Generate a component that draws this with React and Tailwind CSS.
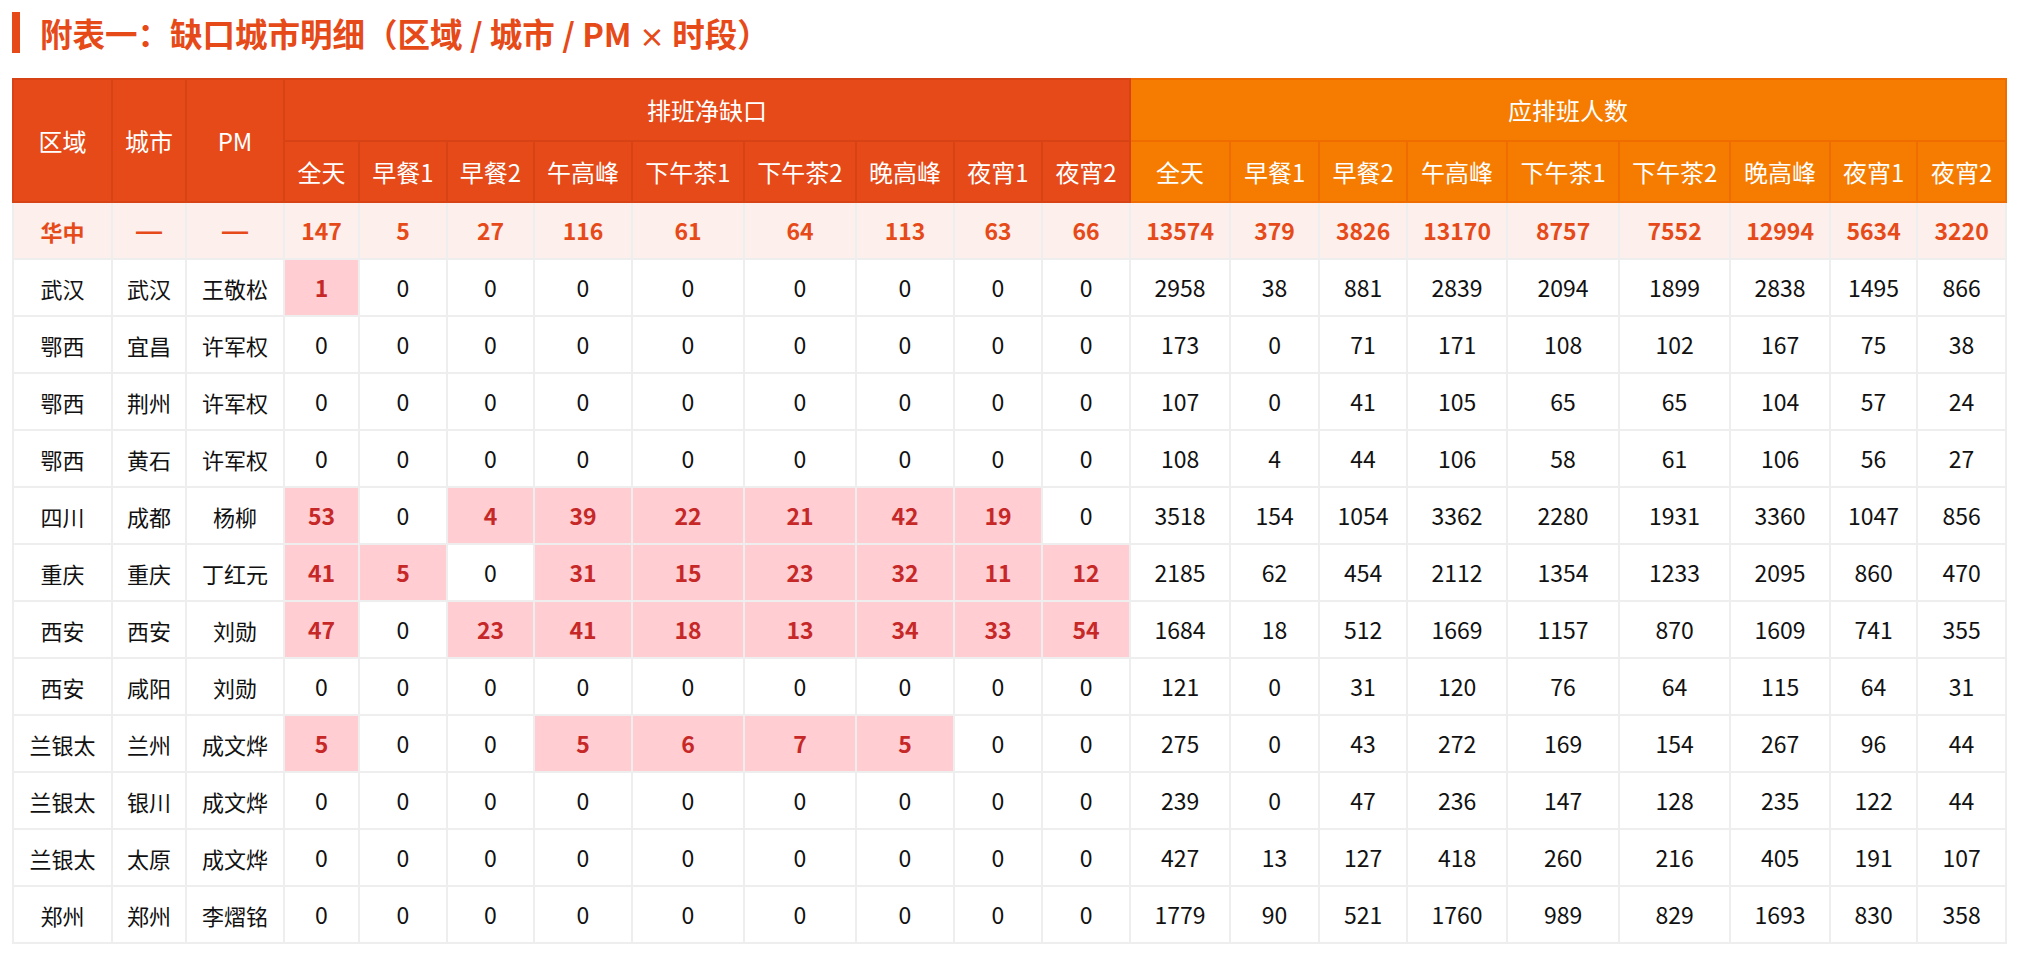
import React from 'react';

const SLOTS = ['全天', '早餐1', '早餐2', '午高峰', '下午茶1', '下午茶2', '晚高峰', '夜宵1', '夜宵2'];

const TOTAL = {
  region: '华中',
  gaps: [147, 5, 27, 116, 61, 64, 113, 63, 66],
  staff: [13574, 379, 3826, 13170, 8757, 7552, 12994, 5634, 3220],
};

const ROWS = [
  { region: '武汉', city: '武汉', pm: '王敬松', gaps: [1, 0, 0, 0, 0, 0, 0, 0, 0], staff: [2958, 38, 881, 2839, 2094, 1899, 2838, 1495, 866] },
  { region: '鄂西', city: '宜昌', pm: '许军权', gaps: [0, 0, 0, 0, 0, 0, 0, 0, 0], staff: [173, 0, 71, 171, 108, 102, 167, 75, 38] },
  { region: '鄂西', city: '荆州', pm: '许军权', gaps: [0, 0, 0, 0, 0, 0, 0, 0, 0], staff: [107, 0, 41, 105, 65, 65, 104, 57, 24] },
  { region: '鄂西', city: '黄石', pm: '许军权', gaps: [0, 0, 0, 0, 0, 0, 0, 0, 0], staff: [108, 4, 44, 106, 58, 61, 106, 56, 27] },
  { region: '四川', city: '成都', pm: '杨柳', gaps: [53, 0, 4, 39, 22, 21, 42, 19, 0], staff: [3518, 154, 1054, 3362, 2280, 1931, 3360, 1047, 856] },
  { region: '重庆', city: '重庆', pm: '丁红元', gaps: [41, 5, 0, 31, 15, 23, 32, 11, 12], staff: [2185, 62, 454, 2112, 1354, 1233, 2095, 860, 470] },
  { region: '西安', city: '西安', pm: '刘勋', gaps: [47, 0, 23, 41, 18, 13, 34, 33, 54], staff: [1684, 18, 512, 1669, 1157, 870, 1609, 741, 355] },
  { region: '西安', city: '咸阳', pm: '刘勋', gaps: [0, 0, 0, 0, 0, 0, 0, 0, 0], staff: [121, 0, 31, 120, 76, 64, 115, 64, 31] },
  { region: '兰银太', city: '兰州', pm: '成文烨', gaps: [5, 0, 0, 5, 6, 7, 5, 0, 0], staff: [275, 0, 43, 272, 169, 154, 267, 96, 44] },
  { region: '兰银太', city: '银川', pm: '成文烨', gaps: [0, 0, 0, 0, 0, 0, 0, 0, 0], staff: [239, 0, 47, 236, 147, 128, 235, 122, 44] },
  { region: '兰银太', city: '太原', pm: '成文烨', gaps: [0, 0, 0, 0, 0, 0, 0, 0, 0], staff: [427, 13, 127, 418, 260, 216, 405, 191, 107] },
  { region: '郑州', city: '郑州', pm: '李熠铭', gaps: [0, 0, 0, 0, 0, 0, 0, 0, 0], staff: [1779, 90, 521, 1760, 989, 829, 1693, 830, 358] },
];

const COLS = [
  'w-[99px]', 'w-[74px]', 'w-[98px]',
  'w-[75px]', 'w-[88px]', 'w-[87px]', 'w-[98px]', 'w-[112px]', 'w-[112px]', 'w-[98px]', 'w-[88px]', 'w-[88px]',
  'w-[100px]', 'w-[89px]', 'w-[88px]', 'w-[100px]', 'w-[112px]', 'w-[111px]', 'w-[100px]', 'w-[87px]', 'w-[89px]',
];

const redHead = 'bg-[#e64a19] border-2 border-[#d84315] text-white text-[24px] font-normal text-center align-middle p-0';
const orangeHead = 'bg-[#f57c00] border-2 border-[#ef6c00] text-white text-[24px] font-normal text-center align-middle p-0';
const cell = 'border-2 border-[#eeeeee] text-center align-middle p-0';
const num = 'border-2 border-[#eeeeee] text-center align-middle p-0 text-[23px]';
const dash = "border-2 border-[#eeeeee] text-center align-middle p-0 font-['Liberation_Sans',sans-serif] text-[26px]";

const App = () => {
  return (
    <div className="min-h-screen bg-white pt-[12px] pl-[12px] font-['Noto_Sans_CJK_SC',sans-serif]">
      {/* Title */}
      <h2 className="h-[41px] border-l-[8px] border-[#e64a19] pl-[20px] text-[32.5px] leading-[41px] font-bold text-[#e64a19]">
        附表一：缺口城市明细（区域 / 城市 / PM <span className="text-[26px]">×</span> 时段）
      </h2>

      <table className="mt-[25px] w-[1993px] table-fixed border-collapse text-[22px] leading-none">
        <colgroup>
          {COLS.map((w, i) => (
            <col key={i} className={w} />
          ))}
        </colgroup>
        <thead>
          <tr className="h-[62px]">
            <th rowSpan={2} className={redHead}>区域</th>
            <th rowSpan={2} className={redHead}>城市</th>
            <th rowSpan={2} className={redHead}>PM</th>
            <th colSpan={9} className={redHead}>排班净缺口</th>
            <th colSpan={9} className={orangeHead}>应排班人数</th>
          </tr>
          <tr className="h-[61px]">
            {SLOTS.map((s) => (
              <th key={'g' + s} className={redHead}>{s}</th>
            ))}
            {SLOTS.map((s) => (
              <th key={'s' + s} className={orangeHead}>{s}</th>
            ))}
          </tr>
        </thead>
        <tbody>
          {/* Region total */}
          <tr className="h-[57px] bg-[#fdefeb] text-[#e64a19] font-bold">
            <td className={cell}>{TOTAL.region}</td>
            <td className={dash}>—</td>
            <td className={dash}>—</td>
            {TOTAL.gaps.map((v, i) => (
              <td key={'tg' + i} className={num}>{v}</td>
            ))}
            {TOTAL.staff.map((v, i) => (
              <td key={'ts' + i} className={num}>{v}</td>
            ))}
          </tr>

          {ROWS.map((r, idx) => (
            <tr key={idx} className="h-[57px] bg-white text-[#111111]">
              <td className={cell}>{r.region}</td>
              <td className={cell}>{r.city}</td>
              <td className={cell}>{r.pm}</td>
              {r.gaps.map((v, i) => (
                <td
                  key={'g' + i}
                  className={v > 0 ? num + ' bg-[#ffcdd2] text-[#c62828] font-bold' : num}
                >
                  {v}
                </td>
              ))}
              {r.staff.map((v, i) => (
                <td key={'s' + i} className={num}>{v}</td>
              ))}
            </tr>
          ))}
        </tbody>
      </table>
    </div>
  );
};

export default App;
